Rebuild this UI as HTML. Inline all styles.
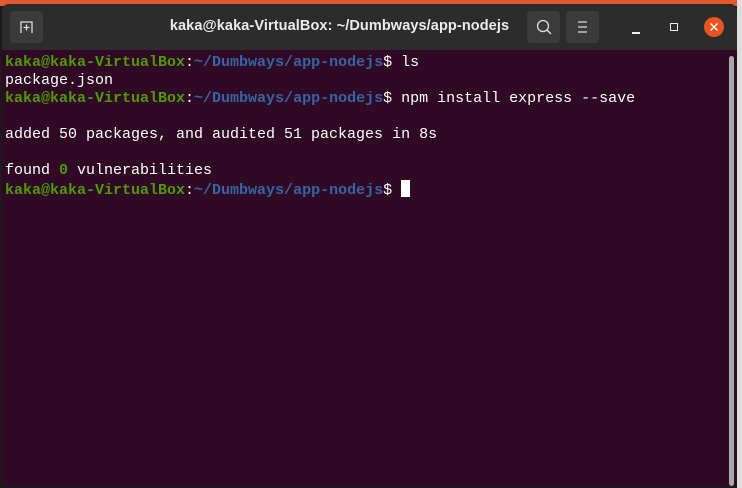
<!DOCTYPE html>
<html><head><meta charset="utf-8"><style>
html,body{margin:0;padding:0;width:742px;height:488px;overflow:hidden;background:#1a1a1a;position:relative}
.topstrip{position:absolute;left:0;top:0;width:742px;height:6px;background:#e05a2b}
.win{position:absolute;left:2px;top:4px;width:735px;height:482px;background:#300a24;border-radius:7px 7px 0 0;overflow:hidden}
.title{position:absolute;left:0;top:0;width:735px;height:46px;background:#2c2c2c;border-radius:7px 7px 0 0}
.btn{position:absolute;top:7px;width:33px;height:32px;background:#3b3b3b;border-radius:4px}
.tt{position:absolute;left:155px;width:365px;top:14px;text-align:center;color:#ececec;font:bold 14.5px "Liberation Sans",sans-serif;letter-spacing:0.1px;white-space:nowrap}
.term{position:absolute;left:3px;top:50px;font:15px/18px "Liberation Mono",monospace;color:#fff;white-space:pre}
.g{color:#4e9a06;font-weight:bold}
.b{color:#3465a4;font-weight:bold}
.cur{display:inline-block;width:9px;height:17px;background:#fff;vertical-align:-3px}
.sb{position:absolute;left:727px;top:52px;width:5px;height:430px;background:#a8a8a8;border-radius:3px}
.right{position:absolute;left:737px;top:0;width:5px;height:488px;background:#ddd}
</style></head><body>
<div class="topstrip"></div>
<div class="right"></div>
<div class="win">
 <div class="title">
  <div class="btn" style="left:8px"><svg width="33" height="32" viewBox="0 0 33 32"><path d="M11 22V11h11v11" fill="none" stroke="#ddd" stroke-width="1.3"/><path d="M16.5 13.5v6M13.5 16.5h6" stroke="#ddd" stroke-width="1.3"/></svg></div>
  <div class="tt">kaka@kaka-VirtualBox: ~/Dumbways/app-nodejs</div>
  <div class="btn" style="left:525px"><svg width="33" height="32" viewBox="0 0 33 32"><circle cx="16" cy="15" r="5.5" fill="none" stroke="#ddd" stroke-width="1.3"/><path d="M20 19l4 4" stroke="#ddd" stroke-width="1.4"/></svg></div>
  <div class="btn" style="left:564px"><svg width="33" height="32" viewBox="0 0 33 32"><path d="M12 11h9M12 16h9M12 21h9" stroke="#ddd" stroke-width="1.3"/></svg></div>
  <div style="position:absolute;left:630px;top:28px;width:8px;height:1.5px;background:#eee"></div>
  <div style="position:absolute;left:668px;top:19px;width:6px;height:6px;border:1.5px solid #eee"></div>
  <div style="position:absolute;left:702px;top:13px;width:20px;height:20px;border-radius:50%;background:#e95420"><svg width="20" height="20" viewBox="0 0 20 20"><path d="M6.5 6.5l7 7M13.5 6.5l-7 7" stroke="#fff" stroke-width="1.4"/></svg></div>
 </div>
 <div class="term"><span class="g">kaka@kaka-VirtualBox</span>:<span class="b">~/Dumbways/app-nodejs</span>$ ls
package.json
<span class="g">kaka@kaka-VirtualBox</span>:<span class="b">~/Dumbways/app-nodejs</span>$ npm install express --save

added 50 packages, and audited 51 packages in 8s

found <span class="g">0</span> vulnerabilities
<span class="g">kaka@kaka-VirtualBox</span>:<span class="b">~/Dumbways/app-nodejs</span>$ <span class="cur"></span></div>
 <div class="sb"></div>
</div>
</body></html>
